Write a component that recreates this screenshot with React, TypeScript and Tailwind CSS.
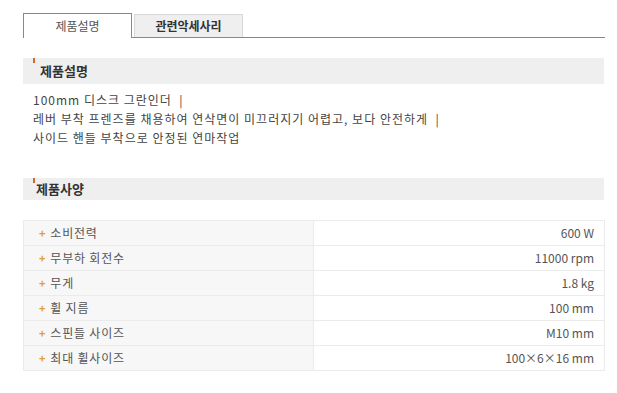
import React from 'react';

const specs: [string, string][] = [
  ['소비전력', '600 W'],
  ['무부하 회전수', '11000 rpm'],
  ['무게', '1.8 kg'],
  ['휠 지름', '100 mm'],
  ['스핀들 사이즈', 'M10 mm'],
  ['최대 휠사이즈', '100×6×16 mm'],
];

const SectionTitle: React.FC<{ title: string; className?: string }> = ({ title, className }) => (
  <div className={`relative flex items-center bg-[#efefef] ${className ?? ''}`}>
    <span className="absolute left-[10px] top-0 w-[2px] h-[5px] bg-[#d2692c]"></span>
    <span className="text-[13px] font-bold text-[#333]">{title}</span>
  </div>
);

const App: React.FC = () => {
  return (
    <div className="w-[617px] h-[393px] bg-white pl-[23px] pt-[13px] font-['Noto_Sans_CJK_KR',sans-serif]">
      {/* tabs */}
      <div className="flex items-end w-[582px] h-[25px] border-b border-[#c8763a]">
        <div className="w-[109px] h-[25px] -mb-px bg-white border border-b-0 border-[#c8763a] flex items-center justify-center text-[12px] text-[#555]">
          제품설명
        </div>
        <div className="w-[109px] h-[23px] ml-[2px] bg-[#efefef] border border-b-0 border-[#d8d8d8] flex items-center justify-center text-[12px] font-bold text-[#333]">
          관련악세사리
        </div>
      </div>

      <SectionTitle title="제품설명" className="mt-[20px] w-[581px] h-[26px] pl-[17px]" />

      <div className="pl-[10px] pt-[6px] text-[12px] leading-[19px] tracking-[1px] text-[#444]">
        <p>100mm 디스크 그란인더 &nbsp;|</p>
        <p>레버 부착 프렌즈를 채용하여 연삭면이 미끄러지기 어렵고, 보다 안전하게 &nbsp;|</p>
        <p>사이드 핸들 부착으로 안정된 연마작업</p>
      </div>

      <SectionTitle title="제품사양" className="mt-[31px] w-[581px] h-[22px] pl-[13px]" />

      <table className="mt-[20px] w-[582px] border-collapse text-[12px] tracking-[0.8px] text-[#555]">
        <tbody>
          {specs.map(([k, v]) => (
            <tr key={k} className="h-[25px]">
              <td className="w-[290px] bg-[#f7f7f7] border border-[#ebebeb] pl-[15px]">
                <span className="text-[#e0a030] text-[11px] font-bold mr-[4px]">+</span>
                {k}
              </td>
              <td className="bg-white border border-[#ebebeb] text-right pr-[10px] tracking-normal">{v}</td>
            </tr>
          ))}
        </tbody>
      </table>
    </div>
  );
};

export default App;
